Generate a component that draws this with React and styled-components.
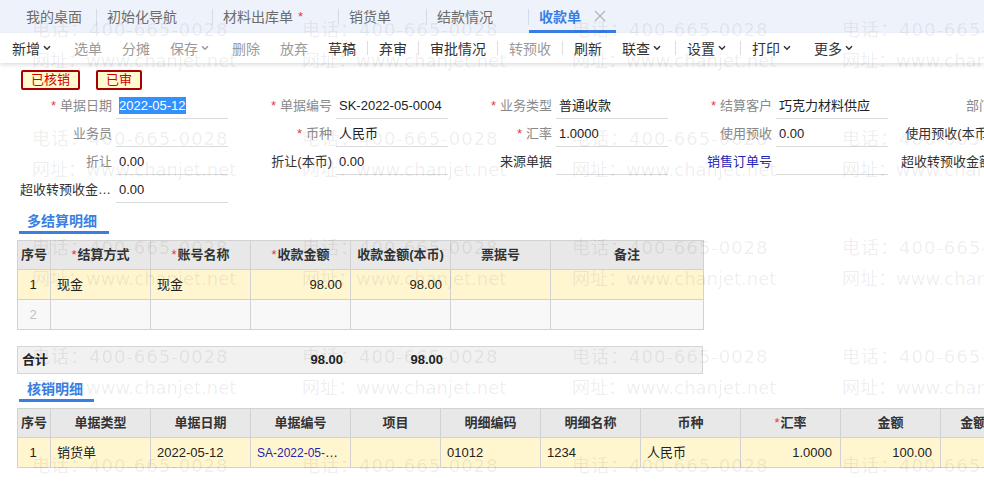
import React from 'react'
import styled, { createGlobalStyle } from 'styled-components'

const GlobalStyle = createGlobalStyle`
  html, body {
    margin: 0;
    padding: 0;
    background: #fff;
  }
  body {
    font-family: "Liberation Sans", "Noto Sans CJK SC", sans-serif;
    font-size: 13px;
    color: #333;
    overflow: hidden;
  }
  * { box-sizing: border-box; }
`

const Chevron = ({ color = '#333' }) => (
  <svg width="8" height="6" viewBox="0 0 8 6" style={{ margin: '0 3px 0 3px' }}>
    <path d="M1 1.2 L4 4.2 L7 1.2" fill="none" stroke={color} strokeWidth="1.5" />
  </svg>
)

const CloseIcon = () => (
  <svg width="12" height="12" viewBox="0 0 12 12">
    <path d="M1 1 L11 11 M11 1 L1 11" stroke="#b5b5b5" strokeWidth="1.3" />
  </svg>
)

const tabs = [
  { name: '我的桌面', home: true },
  { name: '初始化导航' },
  { name: '材料出库单', dirty: true },
  { name: '销货单' },
  { name: '结款情况' },
  { name: '收款单', active: true },
]

const tools = [
  { t: '新增', menu: true },
  { t: '选单', off: true },
  { t: '分摊', off: true },
  { t: '保存', menu: true, off: true },
  { t: '删除', off: true },
  { t: '放弃', off: true },
  { t: '草稿' },
  '|',
  { t: '弃审' },
  '|',
  { t: '审批情况' },
  '|',
  { t: '转预收', off: true },
  '|',
  { t: '刷新' },
  { t: '联查', menu: true },
  '|',
  { t: '设置', menu: true },
  '|',
  { t: '打印', menu: true },
  { t: '更多', menu: true },
]

// tone: muted (grey label), plain (dark label), link (blue label)
const formRows = [
  [
    { label: '单据日期', req: true, value: '2022-05-12', selected: true },
    { label: '单据编号', req: true, value: 'SK-2022-05-0004' },
    { label: '业务类型', req: true, value: '普通收款' },
    { label: '结算客户', req: true, value: '巧克力材料供应' },
    { label: '部门' },
  ],
  [
    { label: '业务员' },
    { label: '币种', req: true, value: '人民币' },
    { label: '汇率', req: true, value: '1.0000' },
    { label: '使用预收', value: '0.00' },
    { label: '使用预收(本币)', tone: 'plain' },
  ],
  [
    { label: '折让', value: '0.00' },
    { label: '折让(本币)', tone: 'plain', value: '0.00' },
    { label: '来源单据', tone: 'plain' },
    { label: '销售订单号', tone: 'link' },
    { label: '超收转预收金额', tone: 'plain' },
  ],
  [
    { label: '超收转预收金额(本币)', tone: 'plain', value: '0.00' },
  ],
]

const settleCols = '33px 100px 100px 100px 100px 100px 153px'
const settleHead = [
  { t: '序号' },
  { t: '结算方式', req: true },
  { t: '账号名称', req: true },
  { t: '收款金额', req: true },
  { t: '收款金额(本币)' },
  { t: '票据号' },
  { t: '备注' },
]

const writeOffCols = '33px 100px 100px 100px 90px 100px 100px 100px 100px 100px 100px'
const writeOffHead = [
  { t: '序号' },
  { t: '单据类型' },
  { t: '单据日期' },
  { t: '单据编号' },
  { t: '项目' },
  { t: '明细编码' },
  { t: '明细名称' },
  { t: '币种' },
  { t: '汇率', req: true },
  { t: '金额' },
  { t: '金额(本币)' },
]

const App = () => {
  const marks = []
  for (let r = 0; r < 5; r++) {
    for (let c = 0; c < 4; c++) {
      marks.push({ key: `p${r}-${c}`, x: 32 + c * 270, y: 19 + r * 109, text: '电话：400-665-0028', phone: true })
      marks.push({ key: `w${r}-${c}`, x: 32 + c * 270, y: 50 + r * 109, text: '网址：www.chanjet.net' })
    }
  }

  return (
    <Page>
      <GlobalStyle />
      <TabBar>
        {tabs.map((tab, i) => (
          <React.Fragment key={tab.name}>
            {i > 0 && <TabSep />}
            <Tab $active={tab.active} $home={tab.home}>
              {tab.name}
              {tab.dirty && <Dirty>*</Dirty>}
              {!tab.home && <TabSlot>{tab.active && <CloseIcon />}</TabSlot>}
            </Tab>
          </React.Fragment>
        ))}
      </TabBar>

      <Toolbar>
        {tools.map((item, i) =>
          item === '|' ? (
            <ToolSep key={i} />
          ) : (
            <ToolButton key={i} $off={item.off}>
              {item.t}
              {item.menu && <Chevron color={item.off ? '#999' : '#333'} />}
            </ToolButton>
          )
        )}
      </Toolbar>

      <StampRow>
        <Stamp>已核销</Stamp>
        <Stamp>已审</Stamp>
      </StampRow>

      <FormGrid>
        {formRows.flat().map((f, i) => (
          <Field key={i}>
            <Label $tone={f.tone}>
              {f.req && <Star>*</Star>}
              {f.label}
            </Label>
            <Value>
              {f.selected ? <Selected>{f.value}</Selected> : f.value}
            </Value>
          </Field>
        ))}
      </FormGrid>

      <SectionTitle>多结算明细</SectionTitle>
      <Grid $cols={settleCols}>
        {settleHead.map((h) => (
          <HeadCell key={h.t}>
            {h.req && <Star $tight>*</Star>}
            {h.t}
          </HeadCell>
        ))}
        <Cell $row="hit" $align="center">1</Cell>
        <Cell $row="hit">现金</Cell>
        <Cell $row="hit">现金</Cell>
        <Cell $row="hit" $align="right">98.00</Cell>
        <Cell $row="hit" $align="right">98.00</Cell>
        <Cell $row="hit" />
        <Cell $row="hit" />
        <Cell $row="blank" $align="center" $faint>2</Cell>
        <Cell $row="blank" />
        <Cell $row="blank" />
        <Cell $row="blank" />
        <Cell $row="blank" />
        <Cell $row="blank" />
        <Cell $row="blank" />
      </Grid>

      <TotalBar $cols={settleCols}>
        <TotalCell>合计</TotalCell>
        <TotalCell />
        <TotalCell />
        <TotalCell $align="right">98.00</TotalCell>
        <TotalCell $align="right">98.00</TotalCell>
      </TotalBar>

      <SectionTitle $small>核销明细</SectionTitle>
      <Grid $cols={writeOffCols}>
        {writeOffHead.map((h) => (
          <HeadCell key={h.t}>
            {h.req && <Star $tight>*</Star>}
            {h.t}
          </HeadCell>
        ))}
        <Cell $row="hit" $align="center">1</Cell>
        <Cell $row="hit">销货单</Cell>
        <Cell $row="hit">2022-05-12</Cell>
        <Cell $row="hit"><DocLink>SA-2022-05-0001</DocLink></Cell>
        <Cell $row="hit" />
        <Cell $row="hit">01012</Cell>
        <Cell $row="hit">1234</Cell>
        <Cell $row="hit">人民币</Cell>
        <Cell $row="hit" $align="right">1.0000</Cell>
        <Cell $row="hit" $align="right">100.00</Cell>
        <Cell $row="hit" $align="right">100.00</Cell>
      </Grid>

      <Watermarks>
        {marks.map((m) => (
          <Mark key={m.key} $phone={m.phone} style={{ left: m.x, top: m.y }}>
            {m.text}
          </Mark>
        ))}
      </Watermarks>
    </Page>
  )
}

export default App

const Page = styled.div`
  position: relative;
  width: 984px;
  height: 484px;
  overflow: hidden;
  background: #fff;
`

const TabBar = styled.div`
  display: flex;
  align-items: stretch;
  height: 33px;
  background: #eef3fb;
  padding-left: 16px;
`

const Tab = styled.div`
  display: flex;
  align-items: center;
  padding: ${(p) => (p.$home ? '0 14px 0 10px' : '0 10px')};
  padding-top: 2px;
  font-size: 14px;
  color: ${(p) => (p.$active ? '#3a7ee4' : '#6b6b6b')};
  font-weight: ${(p) => (p.$active ? 'bold' : 'normal')};
  border-bottom: 3px solid ${(p) => (p.$active ? '#3a7ee4' : 'transparent')};
`

const Dirty = styled.span`
  color: #e0393e;
  margin-left: 5px;
  font-size: 13px;
`

const TabSlot = styled.span`
  display: flex;
  align-items: center;
  justify-content: flex-end;
  width: 25px;
`

const TabSep = styled.div`
  width: 1px;
  height: 16px;
  align-self: center;
  background: #d6dce6;
`

const Toolbar = styled.div`
  position: relative;
  display: flex;
  align-items: center;
  height: 30px;
  padding-left: 2px;
  background: #fff;
  box-shadow: 0 2px 4px rgba(0, 0, 0, 0.13);
`

const ToolButton = styled.div`
  display: flex;
  align-items: center;
  padding: 0 10px;
  font-size: 14px;
  color: ${(p) => (p.$off ? '#9a9a9a' : '#333')};
`

const ToolSep = styled.div`
  width: 1px;
  height: 14px;
  background: #dedede;
  margin: 0 1px;
`

const StampRow = styled.div`
  display: flex;
  gap: 16px;
  padding: 7px 0 0 21px;
`

const Stamp = styled.div`
  height: 20px;
  line-height: 16px;
  padding: 0 8px;
  border: 2px solid #a80000;
  border-radius: 2px;
  background: #fffad0;
  color: #d40000;
  font-size: 13px;
`

const FormGrid = styled.div`
  display: grid;
  grid-template-columns: repeat(5, 220px);
  grid-auto-rows: 28px;
  padding: 2px 0 0 8px;
`

const Field = styled.div`
  display: flex;
  height: 28px;
`

const labelColors = { plain: '#333', link: '#2323b8' }

const Label = styled.div`
  width: 108px;
  flex: none;
  padding: 0 4px 0 12px;
  line-height: 27px;
  text-align: right;
  white-space: nowrap;
  overflow: hidden;
  text-overflow: ellipsis;
  color: ${(p) => labelColors[p.$tone] || '#8a8a8a'};
`

const Star = styled.span`
  color: #e23a46;
  margin-right: ${(p) => (p.$tight ? '1px' : '4px')};
  font-weight: normal;
`

const Value = styled.div`
  width: 112px;
  height: 27px;
  line-height: 27px;
  padding-left: 3px;
  border-bottom: 1px solid #dadada;
  color: #222;
  white-space: nowrap;
  overflow: hidden;
`

const Selected = styled.span`
  background: #3390ff;
  color: #fff;
  padding: 1px 0;
`

const SectionTitle = styled.div`
  display: inline-block;
  margin: ${(p) => (p.$small ? '5px' : '7px')} 0 0 19px;
  padding: 0 ${(p) => (p.$small ? '11px 0 8px' : '12px 0 8px')};
  line-height: 20px;
  font-size: 14px;
  font-weight: bold;
  color: #3b7fe0;
  border-bottom: 3px solid #3b7fe0;
`

const Grid = styled.div`
  display: grid;
  grid-template-columns: ${(p) => p.$cols};
  width: max-content;
  margin: 6px 0 0 17px;
  border-top: 1px solid #d2d2d2;
  border-left: 1px solid #d2d2d2;
`

const HeadCell = styled.div`
  height: 29px;
  line-height: 28px;
  text-align: center;
  font-weight: bold;
  color: #333;
  background: #e8e8e8;
  border-right: 1px solid #d2d2d2;
  border-bottom: 1px solid #d2d2d2;
  white-space: nowrap;
  overflow: hidden;
`

const rowBg = { hit: '#fff6cf', blank: '#f8f8f8' }

const Cell = styled.div`
  height: 30px;
  line-height: 29px;
  padding: 0 8px 0 6px;
  text-align: ${(p) => p.$align || 'left'};
  background: ${(p) => rowBg[p.$row]};
  color: ${(p) => (p.$faint ? '#c4c4c4' : '#222')};
  border-right: 1px solid #d2d2d2;
  border-bottom: 1px solid #d2d2d2;
  white-space: nowrap;
  overflow: hidden;
  text-overflow: ellipsis;
`

const DocLink = styled.span`
  color: #2424b0;
  font-size: 12px;
`

const TotalBar = styled.div`
  display: grid;
  grid-template-columns: ${(p) => p.$cols};
  width: 686px;
  height: 28px;
  margin: 16px 0 0 17px;
  background: #f1f1f1;
  border: 1px solid #d6d6d6;
`

const TotalCell = styled.div`
  line-height: 26px;
  padding: 0 8px 0 4px;
  font-weight: bold;
  color: #222;
  text-align: ${(p) => p.$align || 'left'};
  white-space: nowrap;
`

const Watermarks = styled.div`
  position: absolute;
  inset: 0;
  pointer-events: none;
  z-index: 10;
`

const Mark = styled.div`
  position: absolute;
  font-family: "DejaVu Sans", "Noto Sans CJK SC", sans-serif;
  font-size: 18px;
  line-height: 22px;
  letter-spacing: ${(p) => (p.$phone ? '1px' : '0')};
  color: rgba(0, 0, 0, 0.075);
  white-space: nowrap;
`
